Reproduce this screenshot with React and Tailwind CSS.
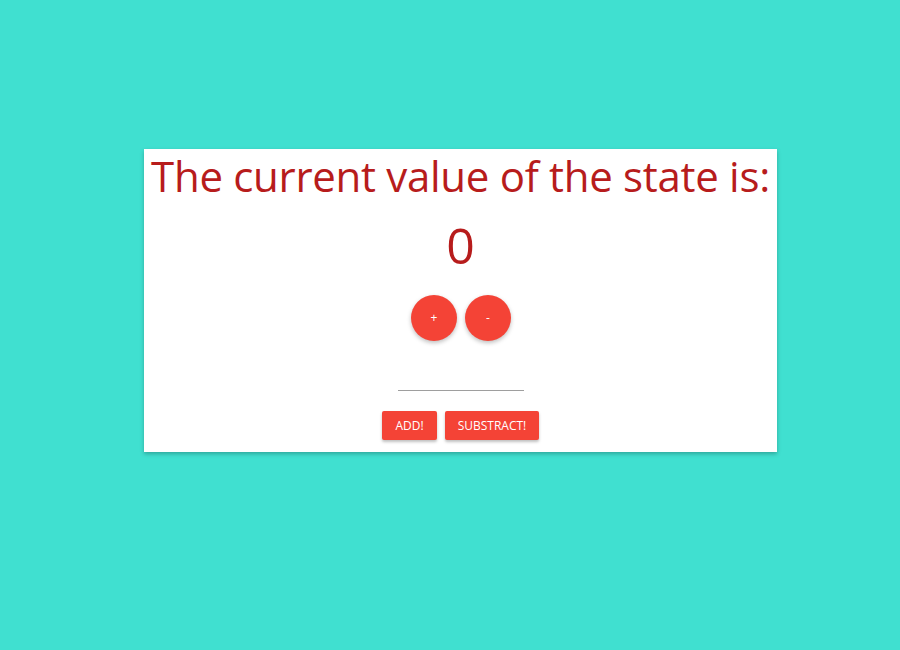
export default function App() {
  return (
    <div className="w-[900px] h-[650px] bg-[#40e0d0] pt-[149px]" style={{ fontFamily: '"Open Sans", "Noto Sans", sans-serif' }}>
      <div className="ml-[144px] w-[633px] h-[303px] bg-white shadow-[0_2px_4px_rgba(0,0,0,0.25)] flex flex-col items-center">
        <div className="h-[54px] flex items-center text-[42px] leading-none text-[#b71c1c] tracking-[-0.3px] whitespace-nowrap">
          The current value of the state is:
        </div>
        <div className="h-[83px] flex items-center text-[50px] leading-none text-[#b71c1c]">0</div>
        <div className="mt-[9px] flex gap-[8px] ml-[1px]">
          <button className="w-[46px] h-[46px] rounded-full bg-[#f44336] text-white text-[12px] shadow-[0_2px_4px_rgba(0,0,0,0.25)] flex items-center justify-center">+</button>
          <button className="w-[46px] h-[46px] rounded-full bg-[#f44336] text-white text-[12px] shadow-[0_2px_4px_rgba(0,0,0,0.25)] flex items-center justify-center">-</button>
        </div>
        <div className="mt-[49px] w-[126px] h-[1px] bg-[#9e9e9e]"></div>
        <div className="mt-[20px] flex gap-[8px]">
          <button className="w-[55px] h-[29px] rounded-[2px] bg-[#f44336] text-white text-[12px] uppercase shadow-[0_2px_3px_rgba(0,0,0,0.25)]">ADD!</button>
          <button className="w-[94px] h-[29px] rounded-[2px] bg-[#f44336] text-white text-[12px] uppercase shadow-[0_2px_3px_rgba(0,0,0,0.25)]">SUBSTRACT!</button>
        </div>
      </div>
    </div>
  );
}
